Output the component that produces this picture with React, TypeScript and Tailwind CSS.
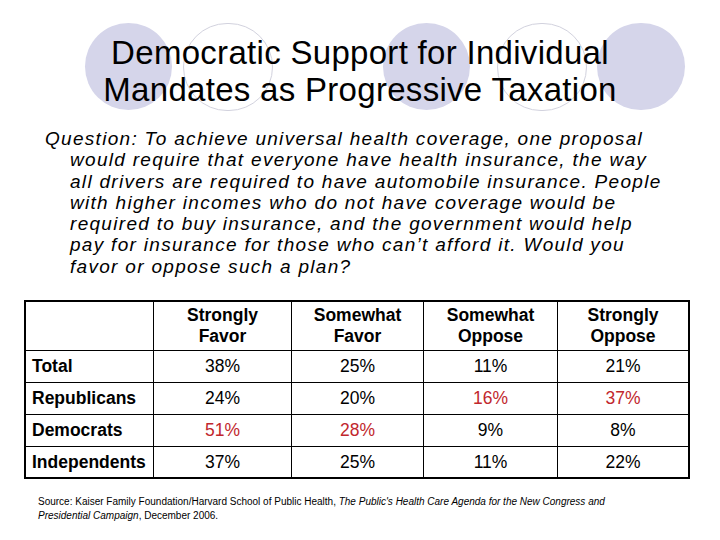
const questionLines = [
  "Question: To achieve universal health coverage, one proposal",
  "would require that everyone have health insurance, the way",
  "all drivers are required to have automobile insurance. People",
  "with higher incomes who do not have coverage would be",
  "required to buy insurance, and the government would help",
  "pay for insurance for those who can’t afford it. Would you",
  "favor or oppose such a plan?",
];

const headers = [
  ["Strongly", "Favor"],
  ["Somewhat", "Favor"],
  ["Somewhat", "Oppose"],
  ["Strongly", "Oppose"],
];

type Cell = { v: string; red?: boolean };

const rows: { label: string; h: string; cells: Cell[] }[] = [
  {
    label: "Total",
    h: "h-[32px]",
    cells: [{ v: "38%" }, { v: "25%" }, { v: "11%" }, { v: "21%" }],
  },
  {
    label: "Republicans",
    h: "h-[32px]",
    cells: [{ v: "24%" }, { v: "20%" }, { v: "16%", red: true }, { v: "37%", red: true }],
  },
  {
    label: "Democrats",
    h: "h-[32px]",
    cells: [{ v: "51%", red: true }, { v: "28%", red: true }, { v: "9%" }, { v: "8%" }],
  },
  {
    label: "Independents",
    h: "h-[30px]",
    cells: [{ v: "37%" }, { v: "25%" }, { v: "11%" }, { v: "22%" }],
  },
];

// widths of the four data columns (incl. their right divider)
const colW = ["w-[138px]", "w-[132px]", "w-[134px]", "w-[130px]"];

// decorative circles behind the title
function Circles() {
  return (
    <div aria-hidden className="pointer-events-none absolute inset-x-0 top-[23px] flex items-start pl-[85px]">
      <div className="h-[87px] w-[87px] shrink-0 rounded-full bg-[#d5d5ea]" />
      <div className="ml-[11px] h-[88px] w-[90px] shrink-0 rounded-full border border-[#d2d2de]" />
      <div className="ml-[110px] h-[87px] w-[87px] shrink-0 rounded-full bg-[#d5d5ea]" />
      <div className="ml-[27px] h-[88px] w-[90px] shrink-0 rounded-full border border-[#d2d2de]" />
      <div className="ml-[10px] h-[87px] w-[88px] shrink-0 rounded-full bg-[#d5d5ea]" />
    </div>
  );
}

export default function App() {
  return (
    <div className="relative h-[540px] w-[720px] overflow-hidden bg-white font-['Liberation_Sans',Arial,sans-serif] text-black">
      <Circles />

      <h1 className="relative pt-[34px] text-center text-[33px] leading-[37px] tracking-[0.3px] font-normal">
        Democratic Support for Individual
        <br />
        Mandates as Progressive Taxation
      </h1>

      <div className="relative mt-[20px] pl-[45px] text-[19px] leading-[21.3px] tracking-[1.3px] italic">
        {questionLines.map((line, i) => (
          <div key={i} className={`whitespace-nowrap ${i > 0 ? "pl-[25px]" : ""}`}>
            {line}
          </div>
        ))}
      </div>

      <div className="relative mt-[23px] ml-[24px] w-[666px] border-2 border-black text-[17.5px]">
        <div className="flex h-[49px] border-b border-black">
          <div className="w-[128px] border-r border-black" />
          {headers.map((hd, i) => (
            <div
              key={i}
              className={`${colW[i]} flex flex-col items-center justify-center leading-[21px] font-bold ${
                i < 3 ? "border-r border-black" : ""
              }`}
            >
              <span>{hd[0]}</span>
              <span>{hd[1]}</span>
            </div>
          ))}
        </div>

        {rows.map((r, ri) => (
          <div
            key={r.label}
            className={`flex ${r.h} ${ri < rows.length - 1 ? "border-b border-black" : ""}`}
          >
            <div className="flex w-[128px] items-center border-r border-black pl-[6px] font-bold">
              {r.label}
            </div>
            {r.cells.map((c, i) => (
              <div
                key={i}
                className={`${colW[i]} flex items-center justify-center ${
                  i < 3 ? "border-r border-black" : ""
                } ${c.red ? "text-[#c1272d]" : ""}`}
              >
                {c.v}
              </div>
            ))}
          </div>
        ))}
      </div>

      <p className="relative mt-[16px] pl-[38px] text-[10px] leading-[13.5px]">
        Source: Kaiser Family Foundation/Harvard School of Public Health,{" "}
        <i>The Public's Health Care Agenda for the New Congress and</i>
        <br />
        <i>Presidential Campaign</i>, December 2006.
      </p>
    </div>
  );
}
